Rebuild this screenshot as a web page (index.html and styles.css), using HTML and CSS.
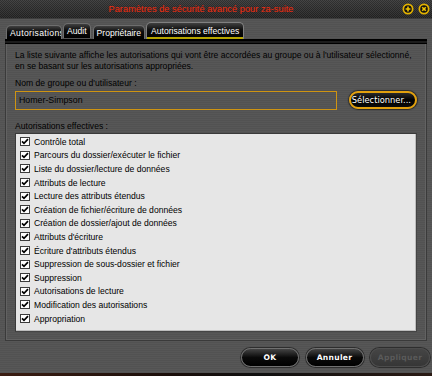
FILE: index.html
```html
<!DOCTYPE html>
<html lang="fr">
  <head>
    <meta charset="UTF-8" />
    <meta name="viewport" content="width=device-width, initial-scale=1.0" />
    <title>Paramètres de sécurité avancé</title>
    <link rel="stylesheet" href="styles.css">
  </head>
  <body>
    <div class="window">
      <div class="titlebar">
        <span class="title">Paramètres de sécurité avancé pour za-suite</span>
        <div class="ctrls">
          <svg class="ctrl" width="12" height="12" viewBox="0 0 12 12">
            <circle cx="6" cy="6" r="5.5" fill="#e3b300" />
            <circle cx="6" cy="6" r="3.8" fill="#111" />
            <path d="M6 3.6v4.8M3.6 6h4.8" stroke="#f0c400" stroke-width="1.6" />
          </svg>
          <svg class="ctrl" width="12" height="12" viewBox="0 0 12 12">
            <circle cx="6" cy="6" r="5.5" fill="#e3b300" />
            <circle cx="6" cy="6" r="3.8" fill="#111" />
            <path d="M4.2 4.2l3.6 3.6M7.8 4.2l-3.6 3.6" stroke="#f0c400" stroke-width="1.6" />
          </svg>
        </div>
      </div>

      <div class="tabs">
        <div class="tab tab-first">Autorisations</div>
        <div class="tab tab-audit">Audit</div>
        <div class="tab tab-owner">Propriétaire</div>
        <div class="tab active">Autorisations effectives</div>
      </div>
      <div class="tabline"></div>

      <div class="panel">
        <p class="intro">
          La liste suivante affiche les autorisations qui vont être accordées au groupe ou à l'utilisateur sélectionné,<br />
          en se basant sur les autorisations appropriées.
        </p>

        <label class="field-label" for="user">Nom de groupe ou d'utilisateur :</label>
        <div class="user-row">
          <div class="user-field" id="user">Homer-Simpson</div>
          <button class="btn-select"><span>Sélectionner...</span></button>
        </div>

        <div class="list-label">Autorisations effectives :</div>
        <ul class="perm-list">
          <li><span class="check"></span>Contrôle total</li>
          <li><span class="check"></span>Parcours du dossier/exécuter le fichier</li>
          <li><span class="check"></span>Liste du dossier/lecture de données</li>
          <li><span class="check"></span>Attributs de lecture</li>
          <li><span class="check"></span>Lecture des attributs étendus</li>
          <li><span class="check"></span>Création de fichier/écriture de données</li>
          <li><span class="check"></span>Création de dossier/ajout de données</li>
          <li><span class="check"></span>Attributs d'écriture</li>
          <li><span class="check"></span>Écriture d'attributs étendus</li>
          <li><span class="check"></span>Suppression de sous-dossier et fichier</li>
          <li><span class="check"></span>Suppression</li>
          <li><span class="check"></span>Autorisations de lecture</li>
          <li><span class="check"></span>Modification des autorisations</li>
          <li><span class="check"></span>Appropriation</li>
        </ul>
      </div>

      <div class="actions">
        <button class="btn">OK</button>
        <button class="btn">Annuler</button>
        <button class="btn" disabled>Appliquer</button>
      </div>
    </div>
    <div class="desktop"></div>
  </body>
</html>
```

FILE: styles.css
```css
body {
  margin: 0;
  width: 432px;
  height: 376px;
  overflow: hidden;
  background-color: #555;
  font-family: "Liberation Sans", Arial, sans-serif;
}

.window {
  height: 373px;
  display: flex;
  flex-direction: column;
  background-color: #545454;
  background-image: repeating-linear-gradient(0deg, #525252 0 1px, #575757 1px 2px);
}

/* title bar */
.titlebar {
  height: 18px;
  display: flex;
  align-items: center;
  background-color: #2e2e2e;
  background-image: linear-gradient(rgba(255, 255, 255, 0.06), rgba(0, 0, 0, 0.15)),
    repeating-conic-gradient(#3a3a3a 0 25%, #252525 0 50%);
  background-size: 100% 100%, 2px 2px;
  border-bottom: 1px solid #3c3c3c;
}

.title {
  flex: 1;
  text-align: center;
  font-size: 9.3px;
  color: #e8361e;
  text-shadow: 0 0 1px #5a0c00;
}

.ctrls {
  display: flex;
  gap: 4px;
  padding-right: 2px;
}

.ctrl {
  display: block;
}

/* tabs */
.tabs {
  height: 20px;
  display: flex;
  align-items: flex-end;
  gap: 1px;
  padding-left: 6px;
}

.tab {
  height: 14px;
  box-sizing: border-box;
  padding: 0 4px;
  display: flex;
  align-items: center;
  white-space: nowrap;
  overflow: hidden;
  font-size: 8.6px;
  color: #fff;
  background: linear-gradient(#404040, #0c0c0c 45%, #000);
  border: 1px solid #6e6e6e;
  border-bottom: none;
  border-radius: 5px 5px 0 0;
}

.tab-first {
  width: 56px;
  padding-left: 3px;
  letter-spacing: 0.35px;
}

.tab-audit {
  height: 15px;
  margin-bottom: 1px;
  padding: 0 3px;
}

.tab-owner {
  margin-left: 1px;
  padding: 0 3px;
}

.tab.active {
  height: 17px;
  padding: 0 4px;
  border-color: #808080;
  box-shadow: inset 0 -2px 0 #b7a600;
}

.tabline {
  height: 5px;
  margin: 0 5px;
  box-sizing: border-box;
  background: #1c1c1c;
  border-top: 2px solid #000;
  border-bottom: 1px solid #000;
}

/* content panel */
.panel {
  height: 297px;
  box-sizing: border-box;
  margin: 0 5px;
  padding: 6px 9px 0 9px;
  border: 1px solid #3a3a3a;
  border-top: none;
  box-shadow: inset 1px 0 #626262, inset -1px -1px #626262;
  font-size: 8.6px;
  color: #000;
}

.intro {
  margin: 0;
  line-height: 10.5px;
}

.field-label {
  display: block;
  margin-top: 7px;
  line-height: 10.5px;
}

.user-row {
  display: flex;
  gap: 12px;
  margin-top: 2px;
  height: 19px;
}

.user-field {
  width: 322px;
  box-sizing: border-box;
  padding-left: 3px;
  display: flex;
  align-items: center;
  border: 1px solid #cf9412;
  font-size: 8.8px;
}

.btn-select {
  width: 68px;
  height: 18px;
  padding: 0 4px 0 0;
  display: flex;
  align-items: center;
  justify-content: flex-end;
  overflow: hidden;
  white-space: nowrap;
  background: linear-gradient(#2a2a2a, #000 50%, #0a0a0a);
  border: 2px solid #e3a10d;
  border-radius: 9px;
  box-shadow: 0 0 1px 1px #2a2a2a;
  color: #fff;
  font-family: "DejaVu Sans", sans-serif;
  font-size: 8.3px;
}

.list-label {
  margin-top: 11px;
  line-height: 10.5px;
}

.perm-list {
  list-style: none;
  margin: 2px 0 0 0;
  padding: 1px 0 0 4px;
  height: 199px;
  box-sizing: border-box;
  background: #e6e6e6;
  border: 1px solid #3a3a3a;
  border-right-color: #454545;
  border-bottom-color: #454545;
  box-shadow: inset -1px -1px #bdbdbd;
}

.perm-list li {
  height: 13.6px;
  display: flex;
  align-items: center;
  gap: 4px;
  white-space: nowrap;
}

.check {
  width: 10px;
  height: 9px;
  box-sizing: border-box;
  border: 1px solid #3c3c3c;
  background: #fff url("data:image/svg+xml;utf8,<svg xmlns='http://www.w3.org/2000/svg' width='8' height='7' viewBox='0 0 8 7'><path d='M1 3.4l2 2 4-4.2' fill='none' stroke='black' stroke-width='1.7'/></svg>") center / 8px 7px no-repeat;
}

/* bottom buttons */
.actions {
  display: flex;
  justify-content: flex-end;
  gap: 6.5px;
  padding: 7px 2px 0 0;
}

.btn {
  width: 58px;
  height: 19px;
  padding: 0;
  border: 1px solid #707070;
  border-radius: 10px;
  box-shadow: 0 0 0 1px #2e2e2e;
  background: linear-gradient(#444, #0a0a0a 50%, #000);
  color: #fff;
  font-family: "DejaVu Sans", sans-serif;
  font-weight: bold;
  font-size: 7.6px;
  letter-spacing: 0.3px;
}

.btn:disabled {
  width: 60px;
  background: linear-gradient(#454545, #363636);
  border-color: #4c4c4c;
  color: #5a5a5a;
}

.desktop {
  height: 3px;
  background: linear-gradient(90deg, #3b1d12, #1a0e0a 40%, #101010 60%, #2a1a14);
}
```
